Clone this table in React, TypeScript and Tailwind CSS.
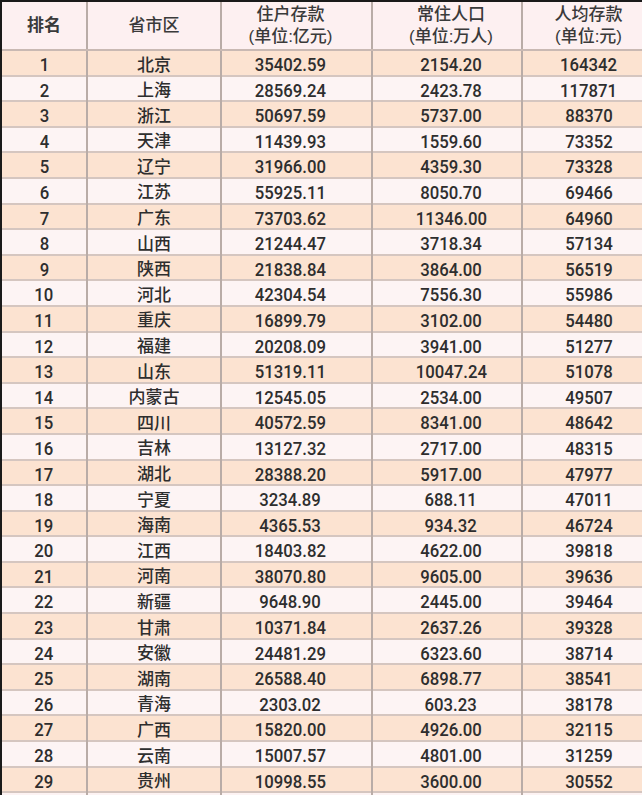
const rows: [string, string, string, string, string][] = [
  ["1", "北京", "35402.59", "2154.20", "164342"],
  ["2", "上海", "28569.24", "2423.78", "117871"],
  ["3", "浙江", "50697.59", "5737.00", "88370"],
  ["4", "天津", "11439.93", "1559.60", "73352"],
  ["5", "辽宁", "31966.00", "4359.30", "73328"],
  ["6", "江苏", "55925.11", "8050.70", "69466"],
  ["7", "广东", "73703.62", "11346.00", "64960"],
  ["8", "山西", "21244.47", "3718.34", "57134"],
  ["9", "陕西", "21838.84", "3864.00", "56519"],
  ["10", "河北", "42304.54", "7556.30", "55986"],
  ["11", "重庆", "16899.79", "3102.00", "54480"],
  ["12", "福建", "20208.09", "3941.00", "51277"],
  ["13", "山东", "51319.11", "10047.24", "51078"],
  ["14", "内蒙古", "12545.05", "2534.00", "49507"],
  ["15", "四川", "40572.59", "8341.00", "48642"],
  ["16", "吉林", "13127.32", "2717.00", "48315"],
  ["17", "湖北", "28388.20", "5917.00", "47977"],
  ["18", "宁夏", "3234.89", "688.11", "47011"],
  ["19", "海南", "4365.53", "934.32", "46724"],
  ["20", "江西", "18403.82", "4622.00", "39818"],
  ["21", "河南", "38070.80", "9605.00", "39636"],
  ["22", "新疆", "9648.90", "2445.00", "39464"],
  ["23", "甘肃", "10371.84", "2637.26", "39328"],
  ["24", "安徽", "24481.29", "6323.60", "38714"],
  ["25", "湖南", "26588.40", "6898.77", "38541"],
  ["26", "青海", "2303.02", "603.23", "38178"],
  ["27", "广西", "15820.00", "4926.00", "32115"],
  ["28", "云南", "15007.57", "4801.00", "31259"],
  ["29", "贵州", "10998.55", "3600.00", "30552"],
];

const cols = "grid grid-cols-[86px_134px_151px_150px_1fr]";
const cell = "flex items-center justify-center border-r-2 border-[#b9aca7] last:border-r-0";
const num = "inline-block scale-x-[0.88] text-[19px] font-medium font-['Roboto',sans-serif]";

export default function App() {
  return (
    <div className="w-[642px] h-[795px] overflow-hidden bg-[#fdf3f3] border-l-2 border-t-2 border-[#1a1a1a] text-[#2e2e2e] font-['Liberation_Sans','Noto_Sans_CJK_SC',sans-serif]">
      <div className={`${cols} h-[49px] bg-[#fdf0f1] border-b-2 border-[#c9b9b3] font-medium text-[#3a3a3a]`}>
        <div className={`${cell} text-[17px] font-bold`}>排名</div>
        <div className={`${cell} text-[17px]`}>省市区</div>
        <div className={`${cell} flex-col text-[17px] leading-[22px] pr-3`}>
          <span>住户存款</span>
          <span>(单位:亿元)</span>
        </div>
        <div className={`${cell} flex-col text-[17px] leading-[22px] pl-2`}>
          <span>常住人口</span>
          <span>(单位:万人)</span>
        </div>
        <div className={`${cell} flex-col text-[17px] leading-[22px] pl-3`}>
          <span>人均存款</span>
          <span>(单位:元)</span>
        </div>
      </div>
      {rows.map((r, i) => (
        <div
          key={r[0]}
          className={`${cols} h-[25.6px] border-b-2 border-[#d5c6c0] ${i % 2 === 0 ? "bg-[#fce3d1]" : "bg-[#fdf4f4]"}`}
        >
          <div className={cell}><span className={num}>{r[0]}</span></div>
          <div className={`${cell} text-[17px] font-medium`}>{r[1]}</div>
          <div className={`${cell} pr-3`}><span className={num}>{r[2]}</span></div>
          <div className={`${cell} pl-2`}><span className={num}>{r[3]}</span></div>
          <div className={`${cell} pl-3`}><span className={num}>{r[4]}</span></div>
        </div>
      ))}
    </div>
  );
}
